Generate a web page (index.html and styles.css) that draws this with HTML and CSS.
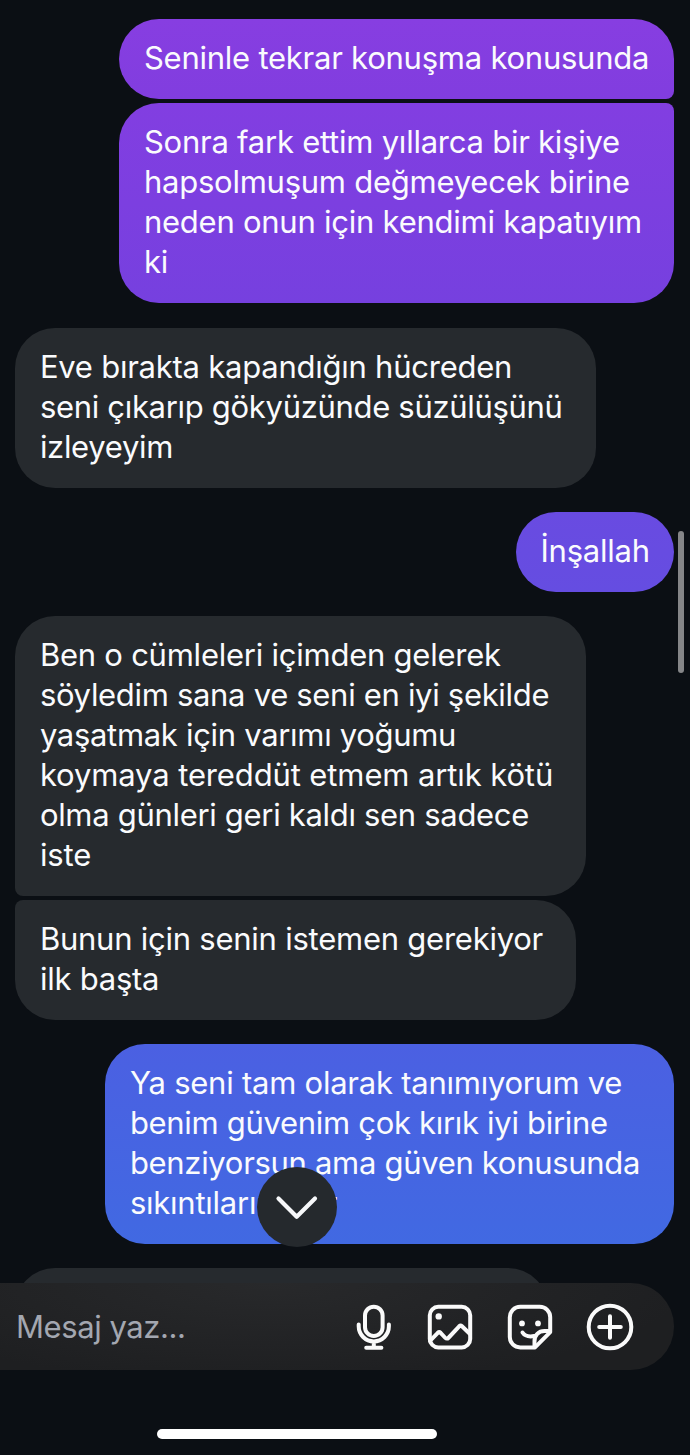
FILE: index.html
```html
<!DOCTYPE html>
<html lang="tr">
<head>
<meta charset="utf-8">
<title>Mesajlar</title>
<link rel="stylesheet" href="styles.css">
</head>
<body>
<div class="app">
  <main class="thread">
    <div class="bubble sent first w-a tone-1"><span>Seninle tekrar konuşma konusunda</span></div>
    <div class="bubble sent last w-a tone-2"><span>Sonra fark ettim yıllarca bir kişiye</span><span>hapsolmuşum değmeyecek birine</span><span>neden onun için kendimi kapatıyım</span><span>ki</span></div>
    <div class="bubble received w-b"><span>Eve bırakta kapandığın hücreden</span><span class="tight">seni çıkarıp gökyüzünde süzülüşünü</span><span class="tight">izleyeyim</span></div>
    <div class="bubble sent w-c tone-3"><span>İnşallah</span></div>
    <div class="bubble received first w-d"><span>Ben o cümleleri içimden gelerek</span><span class="tight">söyledim sana ve seni en iyi şekilde</span><span class="tight">yaşatmak için varımı yoğumu</span><span class="loose">koymaya tereddüt etmem artık kötü</span><span class="tight">olma günleri geri kaldı sen sadece</span><span class="loose">iste</span></div>
    <div class="bubble received last w-e"><span>Bunun için senin istemen gerekiyor</span><span>ilk başta</span></div>
    <div class="bubble sent w-f tone-4"><span>Ya seni tam olarak tanımıyorum ve</span><span class="tight">benim güvenim çok kırık iyi birine</span><span class="tight">benziyorsun ama güven konusunda</span><span>sıkıntılarım var</span></div>
    <div class="bubble received w-g"></div>
  </main>
  <div class="scrollbar"></div>
  <button class="jump" aria-label="En alta git">
    <svg width="80" height="80" viewBox="0 0 80 80"><path d="M21.5 31.5 39.7 49.8 58 31.5"/></svg>
  </button>
  <footer class="composer">
    <span class="placeholder">Mesaj yaz...</span>
    <div class="tools">
      <svg class="icon" viewBox="0 0 48 48"><rect x="19" y="3.7" width="17.6" height="29.3" rx="8.8"/><path d="M12.7 21.5v1.800a15.100 15.100 0 0 0 30.200 0v-1.800M27.800 38.500v6M20.200 44.700h15.200"/></svg>
      <svg class="icon" viewBox="0 0 48 48"><rect x="3.8" y="3.8" width="40.4" height="40.6" rx="8.5"/><circle class="dot" cx="12.7" cy="13.4" r="3.2"/><path d="m4 37.800 7.800-8a2 2 0 0 1 2.800 0l4.800 5.200a2 2 0 0 0 2.900 0l10.900-11.700a2 2 0 0 1 2.800 0L44 31"/></svg>
      <svg class="icon" viewBox="0 0 48 48"><path d="M14.3 3.8h19.4c6 0 10.500 4.500 10.500 10.500v14.800L29 44.400H14.300c-6 0-10.500-4.500-10.500-10.500V14.300c0-6 4.500-10.500 10.500-10.500Z"/><path d="M28.500 43.500v-5.200c0-6 4-10.200 10-10.200h5M16.500 29.500c2 3.200 5.800 4.500 11.500 3.600"/><circle class="dot" cx="16" cy="20.400" r="2.900"/><circle class="dot" cx="32" cy="20.400" r="2.900"/></svg>
      <svg class="icon" viewBox="0 0 48 48"><circle cx="24" cy="24" r="21.300"/><path d="M24 13.200v21.600M13.200 24h21.600"/></svg>
    </div>
  </footer>
  <div class="home"><div class="home-bar"></div></div>
</div>
</body>
</html>
```
FILE: styles.css
```css
* { box-sizing: border-box; }
body { margin: 0; background: #0b0f14; font-family: Inter, "Liberation Sans", sans-serif; }
.app { position: relative; width: 690px; height: 1455px; display: flex; flex-direction: column; overflow: hidden; }
.thread { height: 1283px; flex: none; padding: 19.4px 16px 0 15.4px; display: flex; flex-direction: column; gap: 24px; overflow: hidden; }
.bubble { flex: none; padding: 19px 0 21px 24.5px; border-radius: 40px; color: #fafbfd; font-size: 31px; line-height: 40px; letter-spacing: -0.24px; white-space: nowrap; }
.bubble:nth-child(n+3) { position: relative; top: 0.3px; }
.bubble span { display: block; width: max-content; }
.bubble .tight { letter-spacing: -0.31px; }
.bubble .loose { letter-spacing: -0.12px; }
.sent { align-self: flex-end; }
.received { align-self: flex-start; background: #262a2e; }
.first { margin-bottom: -20px; }
.sent.first { border-bottom-right-radius: 8px; }
.sent.last { border-top-right-radius: 8px; }
.received.first { border-bottom-left-radius: 8px; }
.received.last { border-top-left-radius: 8px; }
.tone-1 { background: linear-gradient(#873ee1, #813ddf); }
.tone-2 { background: linear-gradient(#823ee1, #7640df); }
.tone-3 { background: linear-gradient(#694be1, #654de1); }
.tone-4 { background: linear-gradient(#4b60e2, #4169e2); }
.w-a { width: 554.6px; }
.w-b { width: 580.5px; }
.w-c { width: 158px; }
.w-d { width: 570.5px; }
.w-e { width: 560.5px; }
.w-f { width: 568.6px; }
.w-g { width: 533px; height: 120px; }
.scrollbar { position: absolute; left: 678px; top: 531px; width: 6px; height: 142px; border-radius: 3px; background: #858688; }
.jump { position: absolute; left: 257px; top: 1167px; width: 80px; height: 80px; padding: 0; border: 0; border-radius: 50%; background: #25292d; }
.jump svg { display: block; fill: none; stroke: #f7f8fa; stroke-width: 4.2; stroke-linecap: round; stroke-linejoin: round; }
.composer { width: 674px; height: 87px; flex: none; padding: 0 40px 0 16px; display: flex; align-items: center; justify-content: space-between; border-radius: 0 44px 44px 0; background: radial-gradient(ellipse 420px 100px at 270px 0, #28292b, #1e1f21); }
.placeholder { color: #a3a7b0; font-size: 31px; line-height: 40px; letter-spacing: -0.43px; }
.tools { display: flex; gap: 32px; }
.icon { width: 48px; height: 48px; fill: none; stroke: #fafafa; stroke-width: 4; stroke-linecap: round; stroke-linejoin: round; }
.icon .dot { fill: #fafafa; stroke: none; }
.home { flex: 1; display: flex; justify-content: center; align-items: flex-start; padding: 59px 96px 0 0; }
.home-bar { width: 280px; height: 10px; border-radius: 5px; background: #fff; }
```
